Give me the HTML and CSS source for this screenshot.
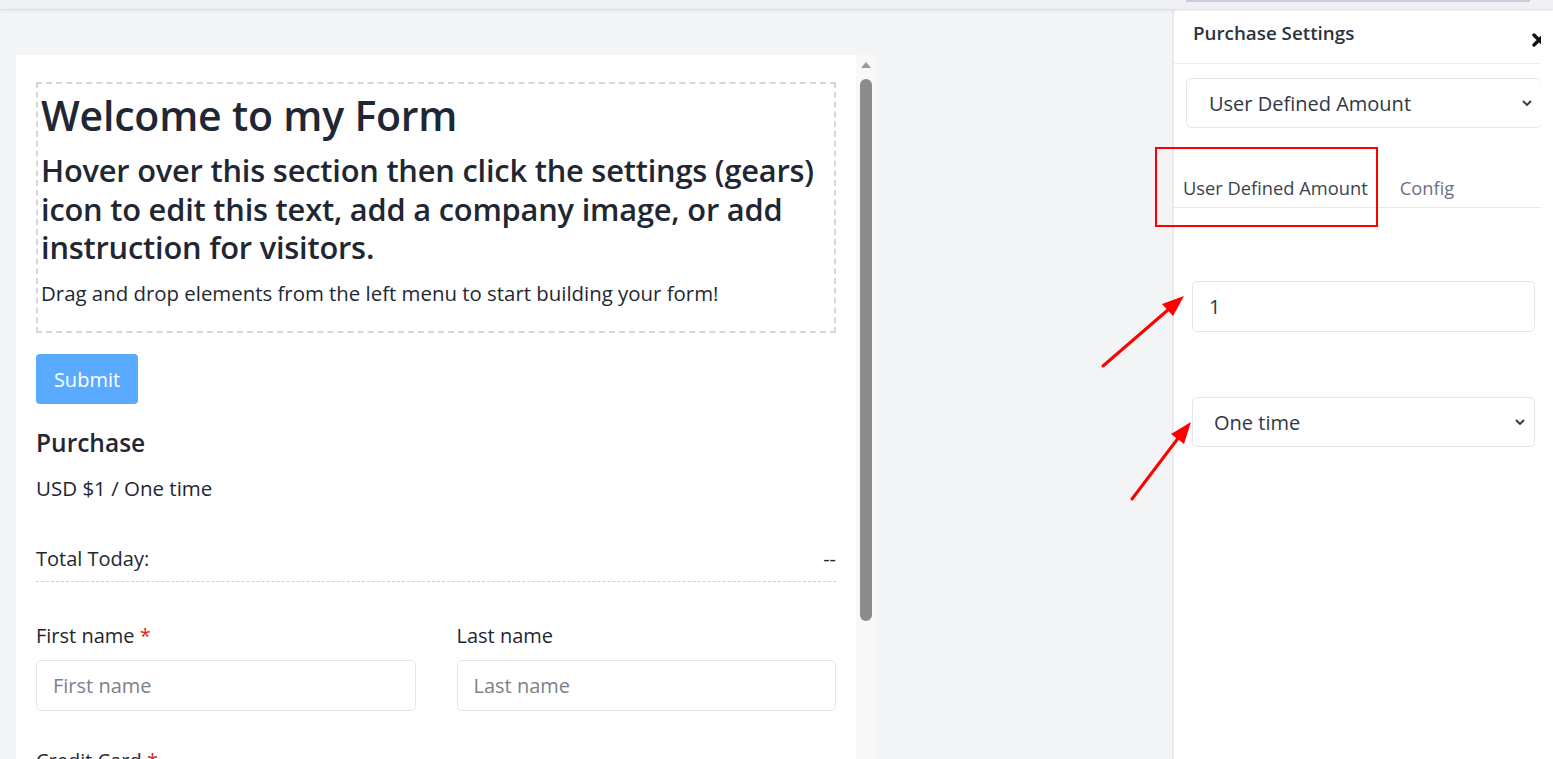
FILE: index.html
```html
<!DOCTYPE html>
<html>
<head>
<meta charset="utf-8">
<link rel="stylesheet" href="styles.css">
</head>
<body>
<div class="topbar"><div class="topbar-tab"></div></div>
<div class="workspace">
  <main class="canvas">
    <div class="card">
      <div class="card-body">
        <div class="intro">
          <h1 class="intro-title">Welcome to my Form</h1>
          <h2 class="intro-sub">Hover over this section then click the settings (gears) icon to edit this text, add a company image, or add instruction for visitors.</h2>
          <p class="intro-text">Drag and drop elements from the left menu to start building your form!</p>
        </div>
        <button class="btn-submit">Submit</button>
        <h3 class="purchase-title">Purchase</h3>
        <p class="purchase-price">USD $1 / One time</p>
        <div class="total-row"><span>Total Today:</span><span>--</span></div>
        <div class="name-row">
          <div class="field">
            <label class="field-label">First name <span class="req">*</span></label>
            <div class="input placeholder">First name</div>
          </div>
          <div class="field">
            <label class="field-label">Last name</label>
            <div class="input placeholder">Last name</div>
          </div>
        </div>
        <label class="field-label cc">Credit Card <span class="req">*</span></label>
      </div>
      <div class="scrollbar">
        <svg class="sb-arrow" width="12" height="8" viewBox="0 0 12 8"><path d="M6 1 L11 7 L1 7 Z" fill="#9a9a9a"/></svg>
        <div class="sb-thumb"></div>
      </div>
    </div>
  </main>
  <aside class="panel">
    <div class="panel-inner">
      <div class="panel-header">
        <span class="panel-title">Purchase Settings</span>
        <svg class="close-icon" width="14" height="14" viewBox="0 0 14 14"><path d="M2 2 L12 12 M12 2 L2 12" stroke="#111" stroke-width="3.4" stroke-linecap="round"/></svg>
      </div>
      <div class="panel-section">
        <div class="select select-type">
          <span>User Defined Amount</span>
          <svg width="12" height="8" viewBox="0 0 12 8"><path d="M2 2 L6 6 L10 2" fill="none" stroke="#333" stroke-width="1.8"/></svg>
        </div>
      </div>
      <div class="tabs">
        <span class="tab active">User Defined Amount</span>
        <span class="tab">Config</span>
      </div>
      <div class="tab-content">
        <div class="input value">1</div>
        <div class="select select-freq">
          <span>One time</span>
          <svg width="12" height="8" viewBox="0 0 12 8"><path d="M2 2 L6 6 L10 2" fill="none" stroke="#333" stroke-width="1.8"/></svg>
        </div>
      </div>
    </div>
  </aside>
</div>
<svg class="annotations" width="1553" height="759" viewBox="0 0 1553 759">
  <rect x="1156" y="148" width="221" height="78" fill="none" stroke="#f00" stroke-width="2"/>
  <line x1="1103" y1="366" x2="1169" y2="309" stroke="#f00" stroke-width="3" stroke-linecap="round"/>
  <polygon points="1184,296 1173,316 1162,304" fill="#f00"/>
  <line x1="1132" y1="499" x2="1179" y2="437" stroke="#f00" stroke-width="3" stroke-linecap="round"/>
  <polygon points="1191,422 1184,444 1171,434" fill="#f00"/>
</svg>
</body>
</html>
```
FILE: styles.css
```css
* { box-sizing: border-box; }
html, body { margin: 0; padding: 0; }
body {
  width: 1553px;
  height: 759px;
  overflow: hidden;
  background: #f3f4f6;
  font-family: "Open Sans", "Noto Sans", sans-serif;
  color: #1f2733;
  position: relative;
}
.topbar {
  height: 9px;
  background: #eff0f3;
  box-shadow: 0 1px 3px rgba(0,0,0,0.12);
  position: relative;
  display: flex;
  justify-content: flex-end;
  padding-right: 23px;
}
.topbar-tab {
  width: 344px;
  height: 2px;
  background: #c9cdd3;
}
.workspace {
  display: flex;
  height: 750px;
  margin-top: 1px;
}
.canvas {
  flex: 1;
  padding: 45px 0 0 16px;
  overflow: hidden;
}
.card {
  width: 860px;
  height: 760px;
  background: #fff;
  display: flex;
}
.card-body {
  flex: 1;
  padding: 27px 20px 0 20px;
}
.scrollbar {
  width: 20px;
  background: #f8f8f8;
  display: flex;
  flex-direction: column;
  align-items: center;
  padding-top: 6px;
}
.sb-arrow { display: block; }
.sb-thumb {
  margin-top: 10px;
  width: 12px;
  height: 542px;
  border-radius: 6px;
  background: #8c8c8c;
}
.intro {
  border: 2px dashed #d6d6d6;
  padding: 2px 3px 12px 3px;
  height: 251px;
}
.intro-title {
  font-size: 41px;
  font-weight: 600;
  margin: 0 0 7px 0;
  line-height: 58px;
  letter-spacing: -0.2px;
}
.intro-sub {
  font-size: 30.8px;
  font-weight: 600;
  line-height: 38.5px;
  margin: 0 0 12px 0;
  letter-spacing: -0.2px;
}
.intro-text {
  font-size: 20.4px;
  margin: 0;
  line-height: 28px;
}
.btn-submit {
  margin-top: 21px;
  display: block;
  height: 50px;
  width: 102px;
  border: none;
  border-radius: 4px;
  background: #5aabff;
  color: #fff;
  font-family: inherit;
  font-size: 20px;
  padding: 0;
}
.purchase-title {
  font-size: 24.5px;
  font-weight: 600;
  margin: 22px 0 0 0;
  line-height: 34px;
}
.purchase-price {
  font-size: 20.5px;
  margin: 14px 0 0 0;
  line-height: 28px;
}
.total-row {
  margin-top: 43px;
  display: flex;
  justify-content: space-between;
  font-size: 20px;
  line-height: 28px;
  padding-bottom: 8px;
  border-bottom: 1px dashed #cfcfcf;
}
.name-row {
  margin-top: 40px;
  display: flex;
  gap: 41px;
}
.field { flex: 1; }
.field-label {
  display: block;
  font-size: 20px;
  line-height: 28px;
  margin-bottom: 10px;
}
.req { color: #e02424; }
.input {
  height: 51px;
  border: 1px solid #e3e6ea;
  border-radius: 5px;
  background: #fff;
  display: flex;
  align-items: center;
  padding: 0 16px;
  font-size: 20px;
}
.placeholder { color: #7c828b; }
.cc { margin-top: 36px; }

.panel {
  width: 381px;
  background: #fff;
  border-left: 2px solid #e8eaee;
  overflow: hidden;
}
.panel-inner {
  width: 367px;
  overflow: hidden;
  height: 100%;
}
.panel-header {
  height: 54px;
  border-bottom: 1px solid #eceef1;
  display: flex;
  justify-content: space-between;
  align-items: center;
  padding: 0 0 0 19px;
  position: relative;
}
.panel-title {
  font-size: 18.8px;
  font-weight: 600;
  color: #2b3340;
  margin-top: -8px;
}
.close-icon {
  margin-right: -5px;
  margin-top: 6px;
}
.panel-section {
  padding: 14px 0 0 12px;
}
.select {
  height: 50px;
  border: 1px solid #e3e6ea;
  border-radius: 5px;
  display: flex;
  justify-content: space-between;
  align-items: center;
  color: #2f3844;
  background: #fff;
}
.select-type {
  width: 356px;
  padding: 0 8px 0 22px;
  font-size: 20px;
}
.tabs {
  margin-top: 20px;
  height: 60px;
  border-bottom: 1px solid #e6e8eb;
  display: flex;
  align-items: flex-end;
  padding-left: 9px;
  padding-bottom: 7px;
}
.tab {
  font-size: 18.3px;
  color: #6b7380;
  margin-right: 32px;
}
.tab.active { color: #3a4350; }
.tab-content {
  padding: 73px 0 0 18px;
}
.tab-content .input,
.tab-content .select {
  width: 343px;
}
.value {
  font-size: 20px;
  color: #2f3844;
}
.select-freq {
  margin-top: 65px;
  padding: 0 8px 0 21px;
  font-size: 20px;
}
.annotations {
  position: absolute;
  left: 0;
  top: 0;
  pointer-events: none;
}
```
